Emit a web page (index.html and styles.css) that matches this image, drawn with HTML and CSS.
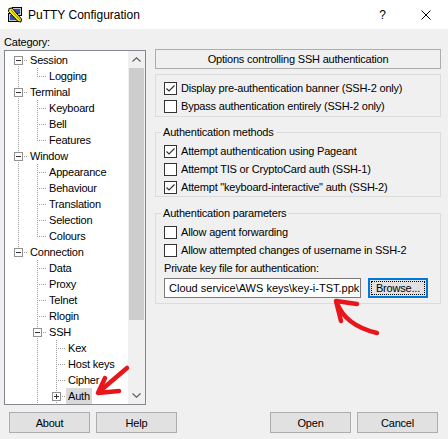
FILE: index.html
```html
<!DOCTYPE html>
<html>
<head>
<meta charset="utf-8">
<title>PuTTY Configuration</title>
<link rel="stylesheet" href="styles.css">
</head>
<body>
<div class="window">
  <div class="titlebar">
    <svg class="app-icon" width="16" height="16" viewBox="0 0 16 16">
      <rect x="5.5" y="0.5" width="9" height="8" fill="#c8c8c8" stroke="#000"/>
      <rect x="7" y="2" width="6" height="5" fill="#2a55a8"/>
      <rect x="1.5" y="6.5" width="9" height="8" fill="#c8c8c8" stroke="#000"/>
      <rect x="3" y="8" width="6" height="5" fill="#2a55a8"/>
      <path d="M2 1.5 L5 1 L14.5 12 L14 15 L11 14.5 L1.5 4.5 Z" fill="#f5e61c" stroke="#000" stroke-width="1"/>
      <path d="M4 3 L13 13" stroke="#9a8a00" stroke-width="1"/>
    </svg>
    <span class="title">PuTTY Configuration</span>
    <span class="help-btn">?</span>
    <svg class="close-btn" width="10" height="10" viewBox="0 0 10 10">
      <path d="M0.5 0.5 L9.5 9.5 M9.5 0.5 L0.5 9.5" stroke="#000" stroke-width="1"/>
    </svg>
  </div>

  <div class="main">
    <div class="left">
      <div class="cat-label">Category:</div>
      <div class="tree">
        <div class="tree-list">
          <div class="row"><span class="c first"><span class="exp"><svg width="7" height="7"><path d="M1 3.5h5" stroke="#333"/></svg></span></span><span class="lbl">Session</span></div>
          <div class="row"><span class="c pipe"></span><span class="c elbow"></span><span class="lbl">Logging</span></div>
          <div class="row"><span class="c tee"><span class="exp"><svg width="7" height="7"><path d="M1 3.5h5" stroke="#333"/></svg></span></span><span class="lbl">Terminal</span></div>
          <div class="row"><span class="c pipe"></span><span class="c tee"></span><span class="lbl">Keyboard</span></div>
          <div class="row"><span class="c pipe"></span><span class="c tee"></span><span class="lbl">Bell</span></div>
          <div class="row"><span class="c pipe"></span><span class="c elbow"></span><span class="lbl">Features</span></div>
          <div class="row"><span class="c tee"><span class="exp"><svg width="7" height="7"><path d="M1 3.5h5" stroke="#333"/></svg></span></span><span class="lbl">Window</span></div>
          <div class="row"><span class="c pipe"></span><span class="c tee"></span><span class="lbl">Appearance</span></div>
          <div class="row"><span class="c pipe"></span><span class="c tee"></span><span class="lbl">Behaviour</span></div>
          <div class="row"><span class="c pipe"></span><span class="c tee"></span><span class="lbl">Translation</span></div>
          <div class="row"><span class="c pipe"></span><span class="c tee"></span><span class="lbl">Selection</span></div>
          <div class="row"><span class="c pipe"></span><span class="c elbow"></span><span class="lbl">Colours</span></div>
          <div class="row"><span class="c elbow"><span class="exp"><svg width="7" height="7"><path d="M1 3.5h5" stroke="#333"/></svg></span></span><span class="lbl">Connection</span></div>
          <div class="row"><span class="c"></span><span class="c tee"></span><span class="lbl">Data</span></div>
          <div class="row"><span class="c"></span><span class="c tee"></span><span class="lbl">Proxy</span></div>
          <div class="row"><span class="c"></span><span class="c tee"></span><span class="lbl">Telnet</span></div>
          <div class="row"><span class="c"></span><span class="c tee"></span><span class="lbl">Rlogin</span></div>
          <div class="row"><span class="c"></span><span class="c tee"><span class="exp"><svg width="7" height="7"><path d="M1 3.5h5" stroke="#333"/></svg></span></span><span class="lbl">SSH</span></div>
          <div class="row"><span class="c"></span><span class="c pipe"></span><span class="c tee"></span><span class="lbl">Kex</span></div>
          <div class="row"><span class="c"></span><span class="c pipe"></span><span class="c tee"></span><span class="lbl">Host keys</span></div>
          <div class="row"><span class="c"></span><span class="c pipe"></span><span class="c tee"></span><span class="lbl">Cipher</span></div>
          <div class="row"><span class="c"></span><span class="c pipe"></span><span class="c tee"><span class="exp"><svg width="7" height="7"><path d="M1 3.5h5 M3.5 1v5" stroke="#333"/></svg></span></span><span class="lbl selected">Auth</span></div>
        </div>
        <div class="scrollbar">
          <div class="sb-btn"><svg width="9" height="5" viewBox="0 0 9 5"><path d="M0.5 4.5 L4.5 0.8 L8.5 4.5" fill="none" stroke="#606060" stroke-width="1.2"/></svg></div>
          <div class="sb-track"><div class="sb-thumb"></div></div>
          <div class="sb-btn"><svg width="9" height="5" viewBox="0 0 9 5"><path d="M0.5 0.5 L4.5 4.2 L8.5 0.5" fill="none" stroke="#606060" stroke-width="1.2"/></svg></div>
        </div>
      </div>
    </div>

    <div class="right">
      <div class="panel-header">Options controlling SSH authentication</div>

      <div class="group group-plain">
        <div class="cb-row"><span class="cb"><svg width="11" height="11" viewBox="0 0 11 11"><path d="M1.5 5.5 L4 8 L9.5 2.5" fill="none" stroke="#333" stroke-width="1.2"/></svg></span>Display pre-authentication banner (SSH-2 only)</div>
        <div class="cb-row"><span class="cb"></span>Bypass authentication entirely (SSH-2 only)</div>
      </div>

      <div class="group group-methods">
        <div class="group-title">Authentication methods</div>
        <div class="group-body">
          <div class="cb-row"><span class="cb"><svg width="11" height="11" viewBox="0 0 11 11"><path d="M1.5 5.5 L4 8 L9.5 2.5" fill="none" stroke="#333" stroke-width="1.2"/></svg></span>Attempt authentication using Pageant</div>
          <div class="cb-row"><span class="cb"></span>Attempt TIS or CryptoCard auth (SSH-1)</div>
          <div class="cb-row"><span class="cb"><svg width="11" height="11" viewBox="0 0 11 11"><path d="M1.5 5.5 L4 8 L9.5 2.5" fill="none" stroke="#333" stroke-width="1.2"/></svg></span>Attempt "keyboard-interactive" auth (SSH-2)</div>
        </div>
      </div>

      <div class="group group-params">
        <div class="group-title">Authentication parameters</div>
        <div class="group-body">
          <div class="cb-row"><span class="cb"></span>Allow agent forwarding</div>
          <div class="cb-row"><span class="cb"></span>Allow attempted changes of username in SSH-2</div>
          <div class="text-row">Private key file for authentication:</div>
          <div class="file-row">
            <div class="keyfile">Cloud service\AWS keys\key-i-TST.ppk</div>
            <div class="browse"><span class="focus">Browse...</span></div>
          </div>
        </div>
      </div>
    </div>
  </div>

  <div class="buttons">
    <div class="btn">About</div>
    <div class="btn">Help</div>
    <div class="spacer"></div>
    <div class="btn">Open</div>
    <div class="btn">Cancel</div>
  </div>

  <svg class="annotations" width="448" height="439" viewBox="0 0 448 439">
    <g fill="none" stroke="#e8161b" stroke-width="4.5" stroke-linecap="round" stroke-linejoin="round">
      <path d="M127 368 L100 391"/>
      <path d="M105 378 L98 393 L119 391"/>
      <path d="M357 304 L336 301 L341 321"/>
      <path d="M337 303 C343 319 356 328 377 333"/>
    </g>
  </svg>
</div>
</body>
</html>
```

FILE: styles.css
```css
:root {
  --v: repeating-linear-gradient(to bottom, #a0a0a0 0 1px, transparent 1px 2px) 9px 0 / 1px 16px no-repeat;
  --vtop: repeating-linear-gradient(to bottom, #a0a0a0 0 1px, transparent 1px 2px) 9px 0 / 1px 9px no-repeat;
  --vbot: repeating-linear-gradient(to bottom, #a0a0a0 0 1px, transparent 1px 2px) 9px 8px / 1px 8px no-repeat;
  --h: repeating-linear-gradient(to right, #a0a0a0 0 1px, transparent 1px 2px) 9px 8px / 10px 1px no-repeat;
}

* { box-sizing: border-box; }

html, body {
  margin: 0;
  padding: 0;
  background: #f0f0f0;
}

body {
  font-family: "Liberation Sans", Arial, sans-serif;
  font-size: 11px;
  letter-spacing: -0.2px;
  color: #000;
}

.window {
  position: relative;
  width: 448px;
  height: 439px;
  overflow: hidden;
}

/* Title bar */
.titlebar {
  height: 29px;
  background: #fff;
  display: flex;
  align-items: center;
}
.app-icon { margin-left: 7px; flex: none; }
.title {
  margin-left: 5px;
  font-size: 12px;
  letter-spacing: 0;
}
.help-btn {
  margin-left: auto;
  font-size: 12px;
  letter-spacing: 0;
  margin-right: 35px;
}
.close-btn { margin-right: 17px; flex: none; }

/* Main area */
.main {
  display: flex;
  padding: 0 7px 0 4px;
}
.left {
  width: 142px;
  flex: none;
}
.cat-label {
  height: 21px;
  padding-top: 6px;
  line-height: 15px;
}

.tree {
  height: 355px;
  border: 1px solid #828790;
  background: #fff;
  display: flex;
}
.tree-list {
  flex: 1;
  overflow: hidden;
  padding: 1px 0 0 4px;
}
.row {
  display: flex;
  height: 16px;
  align-items: center;
}
.c {
  width: 19px;
  height: 16px;
  flex: none;
  display: flex;
  align-items: center;
}
.pipe { background: var(--v); }
.tee { background: var(--h), var(--v); }
.elbow { background: var(--h), var(--vtop); }
.first { background: var(--h), var(--vbot); }

.exp {
  width: 9px;
  height: 9px;
  margin-left: 5px;
  border: 1px solid #919191;
  background: #fff;
  display: flex;
  align-items: center;
  justify-content: center;
}
.exp svg { display: block; }

.lbl {
  padding: 0 2px;
  line-height: 16px;
  white-space: nowrap;
}
.lbl.selected { background: #d9d9d9; }

.scrollbar {
  width: 17px;
  flex: none;
  background: #f0f0f0;
  display: flex;
  flex-direction: column;
}
.sb-btn {
  height: 17px;
  display: flex;
  align-items: center;
  justify-content: center;
}
.sb-track {
  flex: 1;
  padding: 0 1px;
}
.sb-thumb {
  height: 252px;
  background: #cdcdcd;
}

/* Right panel */
.right {
  width: 286px;
  margin-left: 9px;
  flex: none;
  padding-top: 20px;
}
.panel-header {
  height: 20px;
  border: 1px solid #adadad;
  text-align: center;
  line-height: 18px;
}

.group {
  border: 1px solid #dcdcdc;
}
.group-plain {
  margin-top: 5px;
  padding: 4px 0 1px 8px;
}
.group-methods {
  margin-top: 15px;
}
.group-params {
  margin-top: 16px;
}
.group-title {
  width: max-content;
  margin: -9px 0 0 5px;
  padding: 0 2px;
  background: #f0f0f0;
  line-height: 16px;
}
.group-body {
  padding: 2px 0 0 8px;
}
.group-params .group-body {
  padding-bottom: 5px;
}

.cb-row {
  height: 18px;
  display: flex;
  align-items: center;
  white-space: nowrap;
}
.cb {
  width: 13px;
  height: 13px;
  flex: none;
  border: 1px solid #333;
  background: #fff;
  margin-right: 4px;
  display: flex;
  align-items: center;
  justify-content: center;
}
.cb svg { display: block; }

.text-row {
  height: 18px;
  line-height: 18px;
}
.file-row {
  display: flex;
  margin-top: 1px;
  gap: 7px;
}
.keyfile {
  width: 197px;
  height: 20px;
  border: 1px solid #7a7a7a;
  background: #fff;
  display: flex;
  align-items: center;
  white-space: nowrap;
  padding: 0 0 0 4px;
  letter-spacing: 0;
}
.browse {
  width: 60px;
  height: 20px;
  border: 2px solid #0078d7;
  background: #e1e1e1;
  display: flex;
  align-items: center;
  justify-content: center;
  padding: 1px;
}
.browse .focus {
  display: flex;
  align-items: center;
  justify-content: center;
  width: 100%;
  height: 100%;
  border: 1px dotted #000;
}

/* Bottom buttons */
.buttons {
  display: flex;
  margin-top: 7px;
  padding: 0 10px 0 9px;
  gap: 6px;
}
.spacer { flex: 1; }
.btn {
  width: 81px;
  height: 21px;
  border: 1px solid #adadad;
  background: #e1e1e1;
  display: flex;
  align-items: center;
  justify-content: center;
}

/* Red hand-drawn annotation arrows lying over the dialog */
.annotations {
  position: absolute;
  left: 0;
  top: 0;
  pointer-events: none;
}
```
